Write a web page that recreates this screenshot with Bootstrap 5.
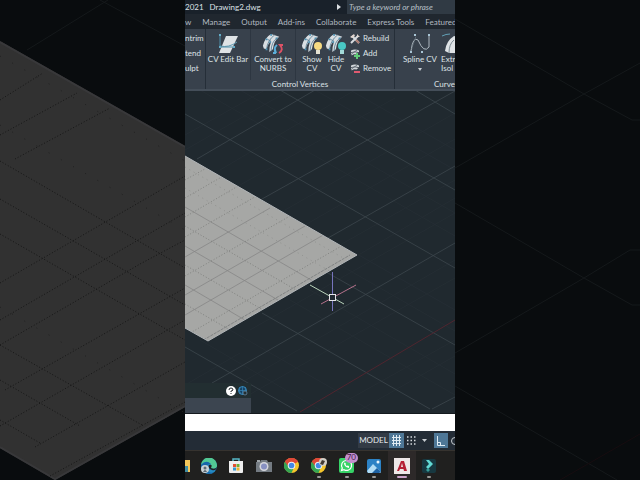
<!DOCTYPE html>
<html lang="en">
<head>
<meta charset="utf-8">
<meta name="viewport" content="width=device-width, initial-scale=1">
<title>Drawing2.dwg</title>
<link href="https://cdn.jsdelivr.net/npm/bootstrap@5.3.0/dist/css/bootstrap.min.css" rel="stylesheet">
<style>
body{background:#090c0e;font-family:Lato,"Open Sans",sans-serif;font-size:8px;line-height:9px;color:#dde2e6}
button,input{font:inherit;color:inherit;background:none;border:0;padding:0}
svg{display:block;flex:none}
.stage{height:100vh}
.backdrop{flex:1 1 0;min-width:0}
.scene{width:100%;height:100%}
.app-frame{aspect-ratio:9/16;height:100%;min-width:0;background:#20292f}
.titlebar{height:14px;background:#19212a;gap:6px}
.title-search{background:#303a44;width:108px;font-style:italic;padding:0 2px}
.title-search::placeholder{color:#b8c0c7;opacity:1}
.tabs{height:15px;padding-top:1px;background:#20272f;gap:11px;color:#b1b9c0}
.tabs a{color:inherit;text-decoration:none}
.ribbon{height:62px;background:#38414c;border-bottom:2px solid #444e59}
.panel{border-right:1px solid #252e38}
.panel-edge{width:21px;padding-top:2px}
.panel-main{width:189px}
.tool{display:flex;flex-direction:column;align-items:center;padding-top:4px}
.tool-wide{width:45px}
.tool-slim{width:24px}
.split{border-right:1px solid #2d3641}
.row-stack{padding-top:2px;margin-left:2px}
.row-tool{display:flex;align-items:center;gap:3px;height:15px}
.canvas-overlay{position:absolute;left:0;bottom:0;width:66px}
.overlay-tools{height:15px;background:#222e31;padding-right:3px;gap:2px}
.overlay-line{height:15px;background:#3c4550}
.canvas-area{border-bottom:1px solid #14191e}
.command{height:17px;background:#fff;color:#222}
.status{height:19px;background:#232c36}
.status button{height:15px;padding:0 3px}
.status .model{background:#333b45;width:31px;padding:0;color:#e4e8ec}
.status .on{background:#4e7797}
.taskbar{height:30px;background:#20201f;border-top:1px solid #36332f;padding-right:12px}
.task{flex:1 1 0;height:100%;display:flex;align-items:center;justify-content:center;position:relative}
.task-edge{width:10px}
.active-task{background:#2d2929}
.running::after{content:"";position:absolute;bottom:2px;width:4px;height:2px;border-radius:1px;background:#9a9a98}
.active-task::after{width:10px;background:#cba3c9}
.count{position:absolute;top:2px;left:12px;width:13px;height:10px;border-radius:5px;background:#c48fce;color:#40204a;text-align:center}
</style>
<script src="https://cdn.jsdelivr.net/npm/bootstrap@5.3.0/dist/js/bootstrap.bundle.min.js"></script>
</head>
<body class="overflow-hidden">
<svg width="0" height="0" class="position-absolute" aria-hidden="true">
<defs>
<symbol id="surf" viewBox="0 0 22 22"><path d="M1 14Q3 5 10 1L19 4Q13 8 12 18L8 21Q8 15 10 9Q6 12 5 18L2 17Z" fill="#d9dee2"/><path d="M5 18Q6 8 14 2M10 9L6 7M10 20Q10 10 17 5" fill="none" stroke="#5f8296"/><path d="M9 1h2v2H9zM4 6h2v2H4zM8 9h2v2H8zM4 17h2v2H4zM15 5h2v2h-2z" fill="#4e91b2"/></symbol>
<symbol id="plane" viewBox="0 0 12 10"><path d="M1 2q5-3 10 0v2Q6 2 1 4zM1 5q5-2 9 0l-2 2Q4 6 2 8z" fill="#d2d7db"/><path d="M2 6l7-5" stroke="#59646e"/></symbol>
<symbol id="chrome" viewBox="0 0 16 16"><circle cx="8" cy="8" r="8" fill="#f5c62c"/><path d="M8 8L1 4A8 8 0 0 1 15 4Z" fill="#dd4736"/><path d="M1 4A8 8 0 0 0 8 16L11 9Z" fill="#35a653"/><path d="M4 8L1 4A8 8 0 0 1 15 4L8 5Z" fill="#df4938"/><circle cx="8" cy="8" r="4" fill="#f5f5f5"/><circle cx="8" cy="8" r="3" fill="#4389e7"/></symbol>
</defs></svg>

<div class="stage d-flex">
<aside class="backdrop" aria-hidden="true">
<svg class="scene" viewBox="0 0 185 480" preserveAspectRatio="xMaxYMid slice">
<rect width="185" height="480" fill="#090c0e"/>
<path d="M27 50L108 0M100 0L185 46" stroke="#15191b"/>
<path d="M0 41L185 146V407L55 480L0 448Z" fill="#313131"/>
<path d="M0 42L185 147M185 406L55 479L0 447" fill="none" stroke="#38383a" stroke-width="2"/>
<g fill="none" stroke="#161616" stroke-dasharray="1 2" stroke-width="1">
<path d="M0 100L43 73M0 135L77 93M15 159L110 108M0 283L185 176M0 320L185 213M0 345L140 264L185 240M5 390L185 288M0 426L185 320M35 447L185 362M50 476L185 402"/>
<path d="M0 161L185 268M0 199L185 305M0 234L185 340M0 345L142 425M0 380L80 426M0 420L40 443"/>
</g>
<path d="M0 56L185 161M0 125L185 230M0 307L185 413" fill="none" stroke="#202020" stroke-dasharray="1 13"/>
</svg>
</aside>

<main class="app-frame d-flex flex-column overflow-hidden">
<header class="titlebar d-flex align-items-center text-nowrap flex-shrink-0">
<span>2021</span><span>Drawing2.dwg</span>
<svg class="ms-auto" width="4" height="6"><path d="M0 0L4 3L0 6Z" fill="#dce0e4"/></svg>
<input class="title-search h-100" aria-label="Search" placeholder="Type a keyword or phrase">
</header>
<nav class="tabs d-flex align-items-center text-nowrap overflow-hidden flex-shrink-0">
<a href="#">w</a><a href="#">Manage</a><a href="#">Output</a><a href="#">Add-ins</a><a href="#">Collaborate</a><a href="#">Express Tools</a><a href="#">Featured A</a>
</nav>
<section class="ribbon d-flex flex-shrink-0 text-nowrap overflow-hidden">
<div class="panel panel-edge flex-shrink-0 d-flex flex-column">
<button class="row-tool">ntrim</button><button class="row-tool">tend</button><button class="row-tool">ulpt</button>
</div>
<div class="panel panel-main flex-shrink-0 d-flex flex-column">
<div class="d-flex flex-grow-1">
<button class="tool tool-wide split">
<svg width="22" height="22" viewBox="0 0 22 22"><path d="M9 3H21L13 20H2Z" fill="#dfe3e6"/><path d="M3 13Q12 15 20 9" stroke="#5f97ae" fill="none"/><path d="M3 2V14H17" stroke="#4f8ea8" fill="none"/><path d="M2 1h2v2H2zM2 13h2v2H2zM16 13h2v2h-2z" fill="#65adc8"/></svg>
<span>CV Edit Bar</span></button>
<button class="tool tool-wide split">
<svg width="22" height="22" viewBox="0 0 22 22"><use href="#surf" width="20" height="20"/><path d="M15 12Q11 15 14 20l-1-3m1 3l-3 0" stroke="#5baed8" stroke-width="2" fill="none"/><path d="M17 20Q22 17 18 12l3 0" stroke="#df5266" stroke-width="2" fill="none"/></svg>
<span>Convert to<br>NURBS</span></button>
<button class="tool tool-slim ms-1">
<svg width="22" height="22" viewBox="0 0 22 22"><use href="#surf" width="20" height="20"/><circle cx="17" cy="13" r="4" fill="#f6da82"/><path d="M15 17h4v4h-4z" fill="#e5e2d2"/></svg>
<span>Show<br>CV</span></button>
<button class="tool tool-slim">
<svg width="22" height="22" viewBox="0 0 22 22"><use href="#surf" width="20" height="20"/><circle cx="17" cy="13" r="4" fill="#49c7c4"/><path d="M15 17h4v4h-4z" fill="#a3dad8"/></svg>
<span>Hide<br>CV</span></button>
<div class="row-stack d-flex flex-column">
<button class="row-tool"><svg width="10" height="10" viewBox="0 0 10 10"><path d="M1 9L8 2M2 2L9 9" stroke="#d8dce0" stroke-width="2"/><path d="M0 3L4 0L5 2L2 4ZM7 0L7 3L10 3" fill="#e2d6d0"/><path d="M6 6L9 9" stroke="#ad7c72" stroke-width="2"/></svg>Rebuild</button>
<button class="row-tool"><svg width="10" height="10" viewBox="0 0 10 10"><use href="#plane" width="10" height="8"/><path d="M7 4V10M4 7H10" stroke="#61cc78" stroke-width="2"/></svg>Add</button>
<button class="row-tool"><svg width="10" height="10" viewBox="0 0 10 10"><use href="#plane" width="10" height="8"/><path d="M4 8H10" stroke="#e05a70" stroke-width="2"/></svg>Remove</button>
</div>
</div>
<div class="pb-0 text-center">Control Vertices</div>
</div>
<div class="flex-fill d-flex flex-column overflow-hidden">
<div class="d-flex flex-grow-1">
<button class="tool flex-shrink-0 ms-2">
<svg width="22" height="22" viewBox="0 0 22 22"><path d="M2 18Q4 3 9 7Q15 21 20 14V3" fill="none" stroke="#aeb8c0"/><path d="M2 18L7 3" stroke="#6e7b85" stroke-dasharray="1 1"/><path d="M1 18h2v2H1zM5 1h2v2H5zM12 18h2v2h-2zM19 1h2v2h-2z" fill="#a9c5d5"/></svg>
<span>Spline CV</span><svg class="mt-1" width="4" height="3"><path d="M0 0H4L2 3Z" fill="#c9ced3"/></svg></button>
<button class="tool ms-1 flex-shrink-0 align-items-start">
<svg width="22" height="22" viewBox="0 0 22 22"><path d="M1 3Q5 1 9 1" stroke="#62a0b6" fill="none"/><path d="M4 18Q5 8 13 3L20 4L14 20H8Z" fill="#dfe3e6"/><path d="M8 20Q8 11 13 7" stroke="#7b8992" fill="none"/></svg>
<span class="text-start">Extr<br>Isol</span></button>
</div>
<div class="text-end">Curve</div>
</div>
</section>

<section class="canvas-area position-relative flex-grow-1 overflow-hidden" aria-label="Drawing area">
<svg class="scene position-absolute" viewBox="185 91 270 324" preserveAspectRatio="xMidYMin slice">
<defs>
<clipPath id="sheet"><path d="M185 156L357 255L208 341L185 328Z"/></clipPath>
</defs>
<rect x="185" y="90" width="270" height="325" fill="#20292f"/>
<g stroke="#262f35" stroke-width=".8" fill="none">
<path d="M240 90L455 213M200 90L455 236M315 90L455 170M350 90L455 150M350 250L455 310M340 265L455 331M310 290L455 374M290 300L455 395M230 330L370 410M200 340L320 410"/>
<path d="M185 135L265 90M185 150L290 90M220 170L355 90M240 185L395 98M285 210L455 113M305 225L455 139M340 245L455 180M350 260L455 198M250 330L455 213M185 385L240 353M225 392L455 260M240 400L455 278M330 410L455 340M360 410L455 356"/>
</g>
<g stroke="#3c464d" stroke-width=".8" fill="none">
<path d="M280 90L455 190M185 114L455 268M185 192L455 345M262 313L430 409M185 347L297 411M415 90L455 114"/>
<path d="M197 159L315 90M262 199L455 91M328 238L455 166M212 383L455 243M432 409L455 397"/>
</g>
<path d="M300 412L455 320" stroke="#55252f" stroke-width=".9"/>
<path d="M185 156L357 255L208 341L185 328Z" fill="#a6a7a5"/>
<g clip-path="url(#sheet)" fill="none">
<path d="M185 207L325 288M185 246L290 307M185 285L250 323M185 257L270 208M185 295L305 226M185 315L325 234" stroke="#868786" stroke-width=".8"/>
<path d="M185 180L212 165M185 198L225 175M185 217L245 182M185 237L260 194M185 276L290 216M185 336L345 244M185 226L310 298M185 265L270 314M185 304L230 330" stroke="#777876" stroke-width=".8" stroke-dasharray="1 2"/>
<path d="M185 167L345 259M185 188L333 273" stroke="#888986" stroke-width=".7" stroke-dasharray="1 4"/>
<path d="M200 342L350 255" stroke="#777a7b" stroke-width=".8" stroke-dasharray="3 1"/>
</g>
<path d="M185 156L357 255L208 341L185 328" fill="none" stroke="#b1b5b8" stroke-width="1"/>
<path d="M332.500 272V311" stroke="#7774bd"/>
<path d="M310 285L344 304" stroke="#bad4bc"/>
<path d="M321 304L356 285" stroke="#b5718b"/>
<rect x="329.500" y="294.500" width="6" height="6" fill="#222a32" stroke="#e5e5e8"/>
</svg>
<div class="canvas-overlay">
<div class="overlay-tools d-flex align-items-center justify-content-end">
<button aria-label="Help"><svg width="10" height="10" viewBox="0 0 10 10"><circle cx="5" cy="5" r="5" fill="#fff"/><path d="M3 4Q3 2 5 2T7 4Q6 5 5 5V6M5 7V8" stroke="#252b30" fill="none"/></svg></button>
<button aria-label="Search online"><svg width="10" height="10" viewBox="0 0 10 10"><circle cx="4.500" cy="4.500" r="4" fill="#174263" stroke="#3687b9"/><path d="M4.500 0V9M0 4.500H9M2 1Q0 5 3 8M7 1Q9 5 6 8" fill="none" stroke="#3687b9" stroke-width=".7"/><circle cx="7" cy="7" r="2" fill="#222e31" stroke="#65839a" stroke-width=".8"/></svg></button>
</div>
<div class="overlay-line"></div>
</div>
</section>

<input class="command w-100 flex-shrink-0" aria-label="Command line">
<section class="status d-flex align-items-center justify-content-end flex-shrink-0 overflow-hidden">
<button class="model">MODEL</button>
<button class="on" aria-label="Grid"><svg width="9" height="11" viewBox="0 0 9 11"><path d="M1.500 0V11M4.500 0V11M7.500 0V11M0 2.500H9M0 5.500H9M0 8.500H9" stroke="#e0ebf2"/></svg></button>
<button aria-label="Snap"><svg width="9" height="9"><path d="M0 1H9M0 4.500H9M0 8H9" stroke="#d6dade" stroke-width="1.500" stroke-dasharray="1.500 2"/></svg></button>
<button aria-label="Snap options"><svg width="5" height="3"><path d="M0 0H5L2.500 3Z" fill="#c8cdd2"/></svg></button>
<button class="on ms-1" aria-label="Ortho"><svg width="8" height="10"><path d="M.5 0V9.500H8M1 6.500H3.500V9" fill="none" stroke="#deebf4"/></svg></button>
<button class="pe-0" aria-label="Polar"><svg width="4" height="8"><circle cx="4" cy="4" r="3.500" fill="none" stroke="#c6ccd1"/></svg></button>
</section>

<footer class="taskbar d-flex align-items-center flex-shrink-0">
<button class="task-edge" aria-label="Files"><svg width="5" height="12"><path d="M0 0H5V12H0Z" fill="#f2c75b"/><path d="M0 6H3V12H0Z" fill="#408ea4"/></svg></button>
<button class="task" aria-label="Edge"><svg width="16" height="16" viewBox="0 0 16 16"><circle cx="8" cy="8" r="8" fill="#248ac3"/><path d="M0 7A8 8 0 0 1 16 8Q15 12 9 10Q12 7 8 5Q3 3 0 7Z" fill="#52c894"/><path d="M0 7Q5 1 10 6Q3 6 7 13Q9 16 13 14A8 8 0 0 1 0 7" fill="#1766a9"/><path d="M8 7Q12 6 10 10Q14 12 16 9Q15 13 11 12Q6 10 8 7" fill="#222"/><circle cx="4" cy="11" r="4" fill="#c8d1d5"/><circle cx="4" cy="10" r="1.500" fill="#5d6973"/><path d="M2 14Q4 10 6 14Z" fill="#5d6973"/></svg></button>
<button class="task" aria-label="Store"><svg width="16" height="16" viewBox="0 0 16 16"><path d="M5 4V1H11V4" fill="none" stroke="#55b6c6" stroke-width="1.500"/><path d="M1 3H15V14Q15 15 14 15H2Q1 15 1 14Z" fill="#eee"/><path d="M5 6h3v3H5z" fill="#e44f32"/><path d="M8.500 6h3v3h-3z" fill="#70ae32"/><path d="M5 9.500h3v3H5z" fill="#3397d0"/><path d="M8.500 9.500h3v3h-3z" fill="#eeb52e"/></svg></button>
<button class="task" aria-label="Camera"><svg width="16" height="14" viewBox="0 0 16 14"><path d="M0 3H4L5 1H11L12 3H16V13H0Z" fill="#747b82"/><path d="M1 1h3v2H1z" fill="#a0a5a9"/><circle cx="8" cy="7.500" r="4.500" fill="#d5d6dd"/><circle cx="8" cy="7.500" r="3" fill="#8790c2"/></svg></button>
<button class="task" aria-label="Chrome"><svg width="15" height="15"><use href="#chrome"/></svg></button>
<button class="task running" aria-label="Chrome profile"><svg width="16" height="16" viewBox="0 0 16 16"><use href="#chrome" width="15" height="15"/><circle cx="12" cy="4" r="4" fill="#d3cec5"/><path d="M9 6L11 2L14 3L12 7Z" fill="#413932"/></svg></button>
<button class="task running" aria-label="WhatsApp"><svg width="15" height="15" viewBox="0 0 15 15"><rect width="15" height="15" rx="2" fill="#36d467"/><path d="M2.500 12.500L3.300 10A5 5 0 1 1 5 11.700Z" fill="none" stroke="#fff" stroke-width="1.200"/><path d="M5 5Q5 9 10 10L10 8L8.500 7.500L8 8Q7 7.500 6.500 6.500L7 6L6 4.500Z" fill="#fff"/></svg><span class="count">70</span></button>
<button class="task running" aria-label="Photos"><svg width="14" height="14" viewBox="0 0 14 14"><rect width="14" height="14" rx="2" fill="#2c82c5"/><path d="M0 12L6 5L14 13L13 14H1Z" fill="#b0dcf4"/><path d="M5 14L10 9L14 13L12 14Z" fill="#1e62a3"/><circle cx="11" cy="3" r="1.500" fill="#e8f4fa"/></svg></button>
<button class="task running active-task" aria-label="AutoCAD"><svg width="16" height="16" viewBox="0 0 16 16"><rect width="16" height="16" fill="#eee7e7"/><path d="M3 13L7 3H10L13 13H10L9.500 11H6L5 13ZM7 9H9L8 5Z" fill="#b51f34" fill-rule="evenodd"/></svg></button>
<button class="task running" aria-label="Filmora"><svg width="14" height="14" viewBox="0 0 14 14"><rect width="14" height="14" rx="2" fill="#173840"/><path d="M4 1H7L11 5L6 10L4 8L7 5Z" fill="#62d9d4"/><path d="M4 11L6 9L8 11L6 13Z" fill="#379995"/></svg></button>
</footer>
</main>

<aside class="backdrop" aria-hidden="true">
<svg class="scene" viewBox="455 0 185 480" preserveAspectRatio="xMinYMid slice">
<rect x="455" width="185" height="480" fill="#090c0e"/>
<path d="M455 19L584 94L632 120H640M455 168L584 94L640 63M455 203L584 278L632 305H640M455 353L584 278L630 250H640M455 386L617 480" fill="none" stroke="#15191b"/>
<path d="M560 480L640 434" stroke="#170d10"/>
</svg>
</aside>
</div>
</body>
</html>
